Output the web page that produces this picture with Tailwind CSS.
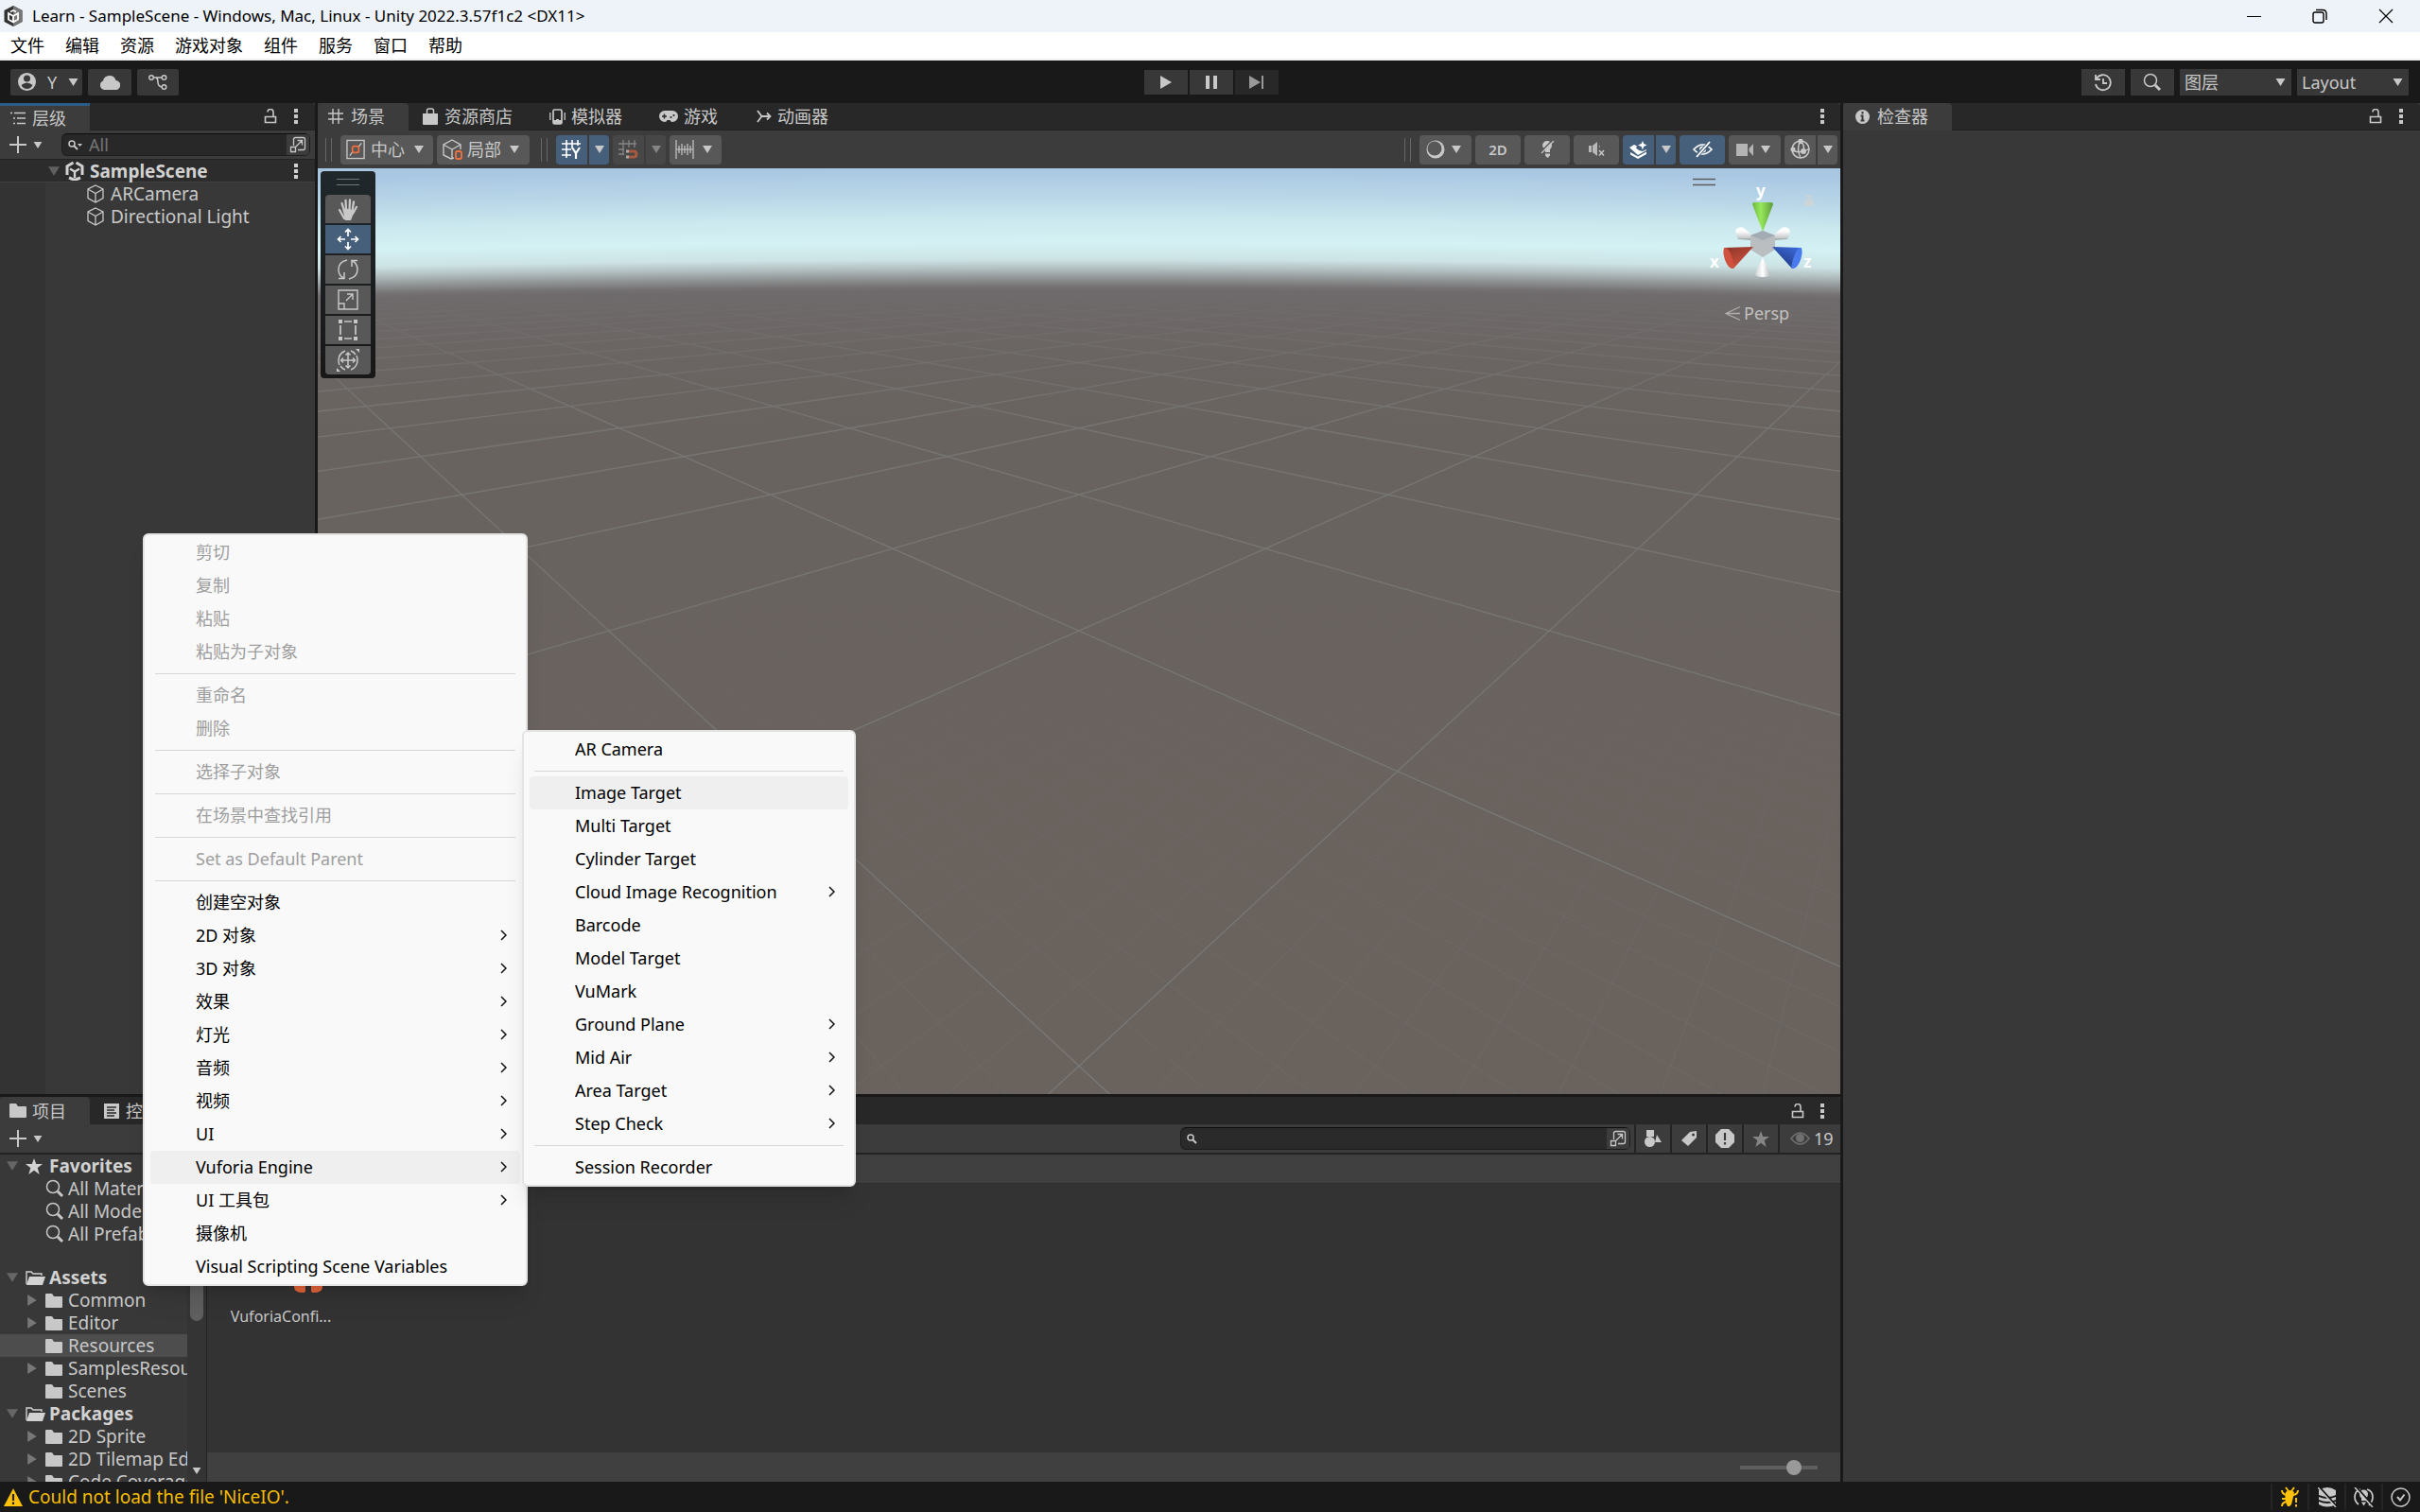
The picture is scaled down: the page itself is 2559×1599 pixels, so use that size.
<!DOCTYPE html>
<html lang="zh-CN">
  <head>
    <meta charset="UTF-8" />
    <meta name="viewport" content="width=device-width, initial-scale=1.0" />
    <title>Learn - SampleScene - Windows, Mac, Linux - Unity 2022.3.57f1c2</title>
    <script src="https://cdn.jsdelivr.net/npm/@tailwindcss/browser@4"></script>
  </head>
  <body
    class="relative flex flex-col h-screen overflow-hidden bg-[#191919] text-[#c8c8c8] text-lg leading-6 font-['Noto_Sans','Noto_Sans_CJK_SC',sans-serif]"
  >
    <!-- icon sprite -->
    <svg class="hidden">
      <symbol id="caret" viewBox="0 0 10 8"><path d="M0 0h10L5 8z" fill="currentColor" /></symbol>
      <symbol id="kebab" viewBox="0 0 4 16"><path d="M0 0h4v4H0zM0 6h4v4H0zM0 12h4v4H0z" fill="currentColor" /></symbol>
      <symbol id="lock" viewBox="0 0 14 16"><path d="M1.500 8.500h11v6h-11zM4 3.500a3 3 0 0 1 6 0v5" fill="none" stroke="currentColor" stroke-width="1.600" /></symbol>
      <symbol id="plus" viewBox="0 0 18 18"><path d="M9 0v18M0 9h18" stroke="currentColor" stroke-width="2" /></symbol>
      <symbol id="lens" viewBox="0 0 20 20"><circle cx="8" cy="8" r="6.500" fill="none" stroke="currentColor" stroke-width="1.500" /><path d="M13 13l5 5" stroke="currentColor" stroke-width="3" /></symbol>
      <symbol id="lens-sm" viewBox="0 0 13 11"><circle cx="4" cy="4" r="3" fill="none" stroke="currentColor" stroke-width="1.500" /><path d="M6 6l4 4" stroke="currentColor" stroke-width="2" /></symbol>
      <symbol id="popout" viewBox="0 0 18 18"><path d="M4.500 10V3.500q0-2 2-2h8q2 0 2 2v9q0 2-2 2H9M1.500 11.500h5v5h-5zM7 11l6-6M8.500 4.500H13.500V9.500" fill="none" stroke="currentColor" stroke-width="1.300" /></symbol>
      <symbol id="cube" viewBox="0 0 20 20"><path d="M10 1l8 4v9.500L10 19l-8-4.500V5zM2 5l8 4.500L18 5M10 9.500V19" fill="none" stroke="currentColor" stroke-width="1.300" /></symbol>
      <symbol id="folder" viewBox="0 0 18 15"><path d="M0 1q0-1 1-1h6l2 3h8q1 0 1 1v10q0 1-1 1H1q-1 0-1-1z" fill="currentColor" /></symbol>
      <symbol id="folder-open" viewBox="0 0 21 15"><path d="M1 14V1h5l2 2h9v2" fill="none" stroke="currentColor" stroke-width="1.400" /><path d="M4 6h17l-3 9H1z" fill="currentColor" /></symbol>
      <symbol id="star" viewBox="0 0 18 17"><path d="M9 0l2.200 6H18l-5.300 4 2 7L9 12.800 3.300 17l2-7L0 6h6.800z" fill="currentColor" /></symbol>
      <symbol id="chev" viewBox="0 0 7 12"><path d="M1 1l5 5-5 5" fill="none" stroke="#111" stroke-width="1.500" /></symbol>
      <symbol id="unity" viewBox="0 0 20 20"><path d="M8.500 1L2 4.800V14M11.500 1L18 4.800V14M4 17l6 2.500 6-2.500" fill="none" stroke="currentColor" stroke-width="3" /><path d="M10 10.500L5 7.500M10 10.500l5-3M10 10.500V17" fill="none" stroke="currentColor" stroke-width="2.400" /></symbol>
    </svg>

    <!-- window title -->
    <header class="flex items-center h-[34px] shrink-0 bg-[#eef3f9] text-black text-[17px]">
      <svg class="ml-1 mr-2.5 w-5 h-6" viewBox="0 0 20 24"><path d="M10 1l9.500 5v12L10 23 .5 18V6z" fill="#333" /><path d="M10 1l9.500 5v12L10 23z" fill="#777" /><path d="M10 12L5 9v6.500l5 3 5-3V9zM10 12v6M7 7.500L10 6l3 1.500" fill="none" stroke="#fff" stroke-width="1.800" /></svg>
      <span class="grow">Learn - SampleScene - Windows, Mac, Linux - Unity 2022.3.57f1c2 &lt;DX11&gt;</span>
      <div class="flex">
        <button class="grid place-items-center w-[69px] h-8" aria-label="最小化"><svg class="w-4 h-4" viewBox="0 0 16 16"><path d="M0 8.500h15" stroke="#000" /></svg></button>
        <button class="grid place-items-center w-[69px] h-8" aria-label="还原"><svg class="w-4 h-4" viewBox="0 0 16 16"><rect x="1" y="4" width="11" height="11" rx="2" fill="none" stroke="#000" stroke-width="1.400" /><path d="M4 1.500h7q4 0 4 4V12" fill="none" stroke="#000" stroke-width="1.400" /></svg></button>
        <button class="grid place-items-center w-[72px] h-8" aria-label="关闭"><svg class="w-4 h-4" viewBox="0 0 16 16"><path d="M1 1l14 14M15 1L1 15" stroke="#000" stroke-width="1.200" /></svg></button>
      </div>
    </header>

    <!-- menu bar -->
    <nav class="flex items-center gap-[22px] h-[30px] shrink-0 px-[11px] bg-white border-b-2 border-[#f0f0f0] text-black">
      <button>文件</button>
      <button>编辑</button>
      <button>资源</button>
      <button>游戏对象</button>
      <button>组件</button>
      <button>服务</button>
      <button>窗口</button>
      <button>帮助</button>
    </nav>

    <!-- main toolbar -->
    <div class="grid grid-cols-3 items-center h-[45px] shrink-0 pl-[11px] pr-3">
      <div class="flex gap-1.5">
        <button class="flex items-center gap-3 w-[76px] h-7 pl-2 rounded-xs bg-[#383838]">
          <svg class="w-[19px] h-[19px]" viewBox="0 0 19 19"><circle cx="9.500" cy="9.500" r="9.500" fill="#c8c8c8" /><circle cx="9.500" cy="6" r="3.500" fill="#383838" /><path d="M3.500 13q6-5 12 0-2 4-6 4t-6-4z" fill="#383838" /></svg>
          Y
          <svg class="w-[11px] h-2"><use href="#caret" /></svg>
        </button>
        <button class="grid place-items-center w-[46px] h-7 rounded-xs bg-[#383838]" aria-label="Cloud"><svg class="w-[22px] h-4" viewBox="0 0 22 16"><path d="M5 16a5 5 0 0 1-1-9.500A7 7 0 0 1 17.500 6 5 5 0 0 1 17 16z" fill="#c8c8c8" /></svg></button>
        <button class="grid place-items-center w-[44px] h-7 rounded-xs bg-[#383838]" aria-label="Version Control"><svg class="w-5 h-[18px]" viewBox="0 0 20 18" fill="none" stroke="#c8c8c8" stroke-width="1.500"><circle cx="3" cy="4" r="2.300" /><circle cx="16.500" cy="4" r="2.300" /><circle cx="16.500" cy="14" r="2.300" /><path d="M5.500 4H14M8 4q2 1 2 5t4 5" /></svg></button>
      </div>
      <div class="flex justify-center gap-0.5 pl-1">
        <button class="grid place-items-center w-[46px] h-[26px] bg-[#383838]" aria-label="Play"><svg class="w-3.5 h-3.5" viewBox="0 0 14 14"><path d="M1 0l12 7-12 7z" fill="#c8c8c8" /></svg></button>
        <button class="grid place-items-center w-[46px] h-[26px] bg-[#383838]" aria-label="Pause"><svg class="w-3.5 h-3.5" viewBox="0 0 14 14"><path d="M1 0h4v14H1zM9 0h4v14H9z" fill="#c8c8c8" /></svg></button>
        <button class="grid place-items-center w-[46px] h-[26px] bg-[#282828]" aria-label="Step"><svg class="w-4 h-3.5" viewBox="0 0 16 14"><path d="M0 0l12 7-12 7zM13 0h2v14h-2z" fill="#999" /></svg></button>
      </div>
      <div class="flex justify-end gap-1.5">
        <button class="grid place-items-center w-[46px] h-7 bg-[#383838]" aria-label="History"><svg class="w-5 h-5" viewBox="0 0 20 20" fill="none" stroke="#c8c8c8" stroke-width="1.800"><path d="M3 6a8 8 0 1 1-1 6M2 2v5h5M10 6v5h4" /></svg></button>
        <button class="grid place-items-center w-[46px] h-7 bg-[#383838]" aria-label="Search"><svg class="w-5 h-5"><use href="#lens" /></svg></button>
        <label class="relative">
          <select class="appearance-none block w-[118px] h-7 pl-[5px] bg-[#383838]" aria-label="图层"><option>图层</option></select>
          <svg class="absolute right-1.5 top-2.5 w-[11px] h-2 pointer-events-none"><use href="#caret" /></svg>
        </label>
        <label class="relative">
          <select class="appearance-none block w-[118px] h-7 pl-[5px] bg-[#383838]" aria-label="Layout"><option>Layout</option></select>
          <svg class="absolute right-1.5 top-2.5 w-[11px] h-2 pointer-events-none"><use href="#caret" /></svg>
        </label>
      </div>
    </div>

    <main class="flex gap-[3px] grow min-h-0">
      <div class="flex flex-col gap-[3px] grow min-w-0">
        <div class="flex gap-[3px] grow min-h-0">
          <!-- hierarchy -->
          <section class="flex flex-col w-[333px] shrink-0 bg-[#383838]">
            <div class="flex items-center h-[29px] pr-[18px] bg-[#282828] border-b border-[#222] rounded-t">
              <button class="flex items-center gap-[7px] w-[95px] h-[29px] pl-[11px] bg-[#3c3c3c] border-t-3 border-[#2c5d87]">
                <svg class="w-4 h-3.5" viewBox="0 0 16 14"><path d="M0 1.500h2M4 1.500h12M3 7h2M7 7h9M3 12.500h2M7 12.500h9" stroke="#c8c8c8" stroke-width="1.600" /></svg>
                层级
              </button>
              <svg class="ml-auto mr-[18px] w-3.5 h-4"><use href="#lock" /></svg>
              <svg class="w-1 h-4"><use href="#kebab" /></svg>
            </div>
            <div class="flex items-center h-[31px] pl-2.5 pr-[5px] bg-[#3c3c3c] border-b border-[#232323]">
              <svg class="w-[18px] h-[18px]"><use href="#plus" /></svg>
              <svg class="ml-[7px] mr-5 w-2.5 h-[7px]"><use href="#caret" /></svg>
              <label class="flex items-center grow h-6 pl-1.5 rounded-md bg-[#282828] border border-[#1d1d1d] border-t-[#0d0d0d]">
                <svg class="w-4 h-[11px]" viewBox="0 0 16 11"><circle cx="4" cy="4" r="3" fill="none" stroke="currentColor" stroke-width="1.500" /><path d="M6 6l4 4" stroke="currentColor" stroke-width="2" /><path d="M10 4h5l-2.500 3z" fill="currentColor" /></svg>
                <input class="grow w-0 ml-1.5 outline-none placeholder:text-[#757575]" placeholder="All" aria-label="Search hierarchy" />
                <div class="flex items-center h-[22px] px-[3px] rounded-r bg-[#3c3c3c]"><svg class="w-[18px] h-[18px]"><use href="#popout" /></svg></div>
              </label>
            </div>
            <div class="flex items-center h-6 pl-[51px] pr-[18px] bg-[#2c2c2c] border-b border-[#404040] text-[19px] font-bold text-[#d2d2d2]">
              <svg class="w-3 h-3 text-[#606060]"><use href="#caret" /></svg>
              <svg class="mx-1.5 w-5 h-5"><use href="#unity" /></svg>
              SampleScene
              <svg class="ml-auto w-1 h-4"><use href="#kebab" /></svg>
            </div>
            <div class="flex grow text-[19px]">
              <div class="w-12 bg-[#333]"></div>
              <ul class="grow pl-[43px]">
                <li class="flex items-center gap-1.5 h-6"><svg class="w-5 h-5"><use href="#cube" /></svg>ARCamera</li>
                <li class="flex items-center gap-1.5 h-6"><svg class="w-5 h-5"><use href="#cube" /></svg>Directional Light</li>
              </ul>
            </div>
          </section>

          <!-- scene view -->
          <section class="flex flex-col grow min-w-0 bg-[#3c3c3c]">
            <div class="flex items-center h-[29px] shrink-0 pr-[17px] bg-[#282828] border-b border-[#222] rounded-t">
              <button class="flex items-center gap-2 w-24 h-[29px] pl-[11px] rounded-t bg-[#3c3c3c]"><svg class="w-4 h-4" viewBox="0 0 16 16"><path d="M5 0v16M11 0v16M0 5h16M0 11h16" stroke="#c8c8c8" stroke-width="1.400" /></svg>场景</button>
              <button class="flex items-center gap-[7px] pl-[15px] pr-6"><svg class="w-4 h-[18px]" viewBox="0 0 16 18"><path d="M0 6h16v11q0 1-1 1H1q-1 0-1-1z" fill="#c8c8c8" /><path d="M4.500 9V3q0-2 2-2h3q2 0 2 2v6" fill="none" stroke="#c8c8c8" stroke-width="1.500" /></svg>资源商店</button>
              <button class="flex items-center gap-1.5 pl-[15px] pr-6"><svg class="w-[17px] h-[17px]" viewBox="0 0 17 17"><path d="M.8 4v8M16.200 4v8" stroke="#c8c8c8" stroke-width="1.300" /><rect x="4" y="1" width="9" height="15" rx="1.500" fill="none" stroke="#c8c8c8" stroke-width="1.700" /><path d="M4 12h3v-1h3v1h3v4H4z" fill="#c8c8c8" /></svg>模拟器</button>
              <button class="flex items-center gap-1.5 pl-[15px] pr-6"><svg class="w-5 h-3" viewBox="0 0 20 12"><path d="M6 0h8a6 6 0 0 1 0 12q-2 0-2.500-2h-3Q8 12 6 12A6 6 0 0 1 6 0z" fill="#c8c8c8" /><path d="M3 6h5M5.500 3.500v5" stroke="#282828" stroke-width="1.500" /><circle cx="12.500" cy="7" r="1.100" fill="#282828" /><circle cx="15.500" cy="5" r="1.100" fill="#282828" /></svg>游戏</button>
              <button class="flex items-center gap-1.5 pl-[17px]"><svg class="w-4 h-3.5" viewBox="0 0 16 14"><path d="M1 1l4.500 6h8M1 13l4.500-6M11 3.500L14.500 7 11 10.500" fill="none" stroke="#c8c8c8" stroke-width="1.800" /></svg>动画器</button>
              <svg class="ml-auto w-1 h-4"><use href="#kebab" /></svg>
            </div>
            <div class="flex items-center h-10 shrink-0 pl-2 pr-[3px]">
              <div class="w-[7px] h-[25px] mr-[9px] border-x border-[#666]"></div>
              <button class="flex items-center gap-[5px] w-[98px] h-[31px] pl-1.5 mr-1 rounded bg-[#585858]">
                <svg class="w-[21px] h-[22px] shrink-0" viewBox="0 0 22 22" fill="none"><rect x="1" y="1" width="19" height="20" stroke="#c8c8c8" stroke-width="1.400" /><path d="M4 18l3-4M14 8l3-4" stroke="#c8c8c8" stroke-width="1.400" /><rect x="7" y="7.500" width="7" height="7" rx="2" stroke="#f4703f" stroke-width="1.800" /></svg>
                中心
                <svg class="ml-1 w-3 h-2"><use href="#caret" /></svg>
              </button>
              <button class="flex items-center gap-1 w-[98px] h-[31px] pl-1.5 rounded bg-[#585858]">
                <svg class="w-[22px] h-[22px] shrink-0" viewBox="0 0 22 22" fill="none"><path d="M12 20l-3 1-8-4V6l9-5 9 5v5M1 6l9 5 9-5M10 11v9" stroke="#c8c8c8" stroke-width="1.400" /><rect x="14" y="13" width="6" height="8" rx="2" stroke="#f4703f" stroke-width="1.800" /></svg>
                局部
                <svg class="ml-1 w-3 h-2"><use href="#caret" /></svg>
              </button>
              <div class="w-[7px] h-[25px] ml-3 mr-[9px] border-x border-[#666]"></div>
              <button class="grid place-items-center w-[33px] h-[31px] mr-0.5 rounded-l bg-[#46607c]" aria-label="Grid"><svg class="w-[22px] h-[22px]" viewBox="0 0 22 22" fill="none" stroke="#fff"><path d="M5 1v19M11 1v9M17 1v6M0 5h20M0 11h10M0 17h10" stroke-width="1.600" /><path d="M11 9l4 6 4-6M15 15v6" stroke-width="2.200" /></svg></button>
              <button class="grid place-items-center w-[21px] h-[31px] mr-1 rounded-r bg-[#46607c]" aria-label="Grid options"><svg class="w-3 h-2"><use href="#caret" /></svg></button>
              <button class="grid place-items-center w-[33px] h-[31px] mr-0.5 rounded-l bg-[#474747]" aria-label="Snap"><svg class="w-[22px] h-[22px]" viewBox="0 0 22 22" fill="none"><path d="M5 1v16M11 1v8M17 1v8M0 5h19M0 11h6M0 16h6" stroke="#858585" stroke-width="1.300" /><path d="M11 13h5q3 0 3 3t-3 3h-5" stroke="#a85a41" stroke-width="3" /><path d="M8 11.500h3v3H8zM8 17.500h3v3H8z" fill="#aaa" /></svg></button>
              <button class="grid place-items-center w-[21px] h-[31px] mr-1 rounded-r bg-[#474747] text-[#858585]" aria-label="Snap options"><svg class="w-3 h-2"><use href="#caret" /></svg></button>
              <button class="flex items-center gap-2 w-[55px] h-[31px] pl-1.5 rounded bg-[#585858]" aria-label="Increment"><svg class="w-5 h-5" viewBox="0 0 20 20"><path d="M1 0v20M4 6v8M7 4v12M10 6v8M13 4v12M16 6v8M19 0v20M1 10h18" stroke="#c8c8c8" stroke-width="1.200" /></svg><svg class="w-3 h-2"><use href="#caret" /></svg></button>

              <div class="w-[7px] h-[25px] ml-auto mr-[9px] border-x border-[#666]"></div>
              <button class="flex items-center gap-1.5 w-[55px] h-[31px] pl-[7px] mr-1 rounded bg-[#585858]" aria-label="Shading"><svg class="w-5 h-5" viewBox="0 0 20 20"><circle cx="10" cy="10" r="9.500" fill="#c8c8c8" /><circle cx="9" cy="9" r="7.500" fill="#585858" /></svg><svg class="w-3 h-2"><use href="#caret" /></svg></button>
              <button class="w-12 h-[31px] mr-1 rounded bg-[#585858] text-[15px] font-semibold">2D</button>
              <button class="grid place-items-center w-12 h-[31px] mr-1 rounded bg-[#585858]" aria-label="Lighting"><svg class="w-4 h-[18px]" viewBox="0 0 16 18"><path d="M3 5a5 5 0 0 1 10 0q0 2-2 4v3H6V9Q3 7 3 5zM6 13.500h5v2L8.500 18 6 15.500z" fill="#c8c8c8" /><path d="M2 11L13 0" stroke="#585858" stroke-width="1.500" /><path d="M2 13L15 0" stroke="#c8c8c8" stroke-width="1.300" /></svg></button>
              <button class="grid place-items-center w-12 h-[31px] mr-1 rounded bg-[#585858]" aria-label="Audio"><svg class="w-[17px] h-4" viewBox="0 0 17 16"><path d="M0 4h3v7H0zM4 4l5-4v15l-5-4zM10.500 3q2 1 1.500 4" fill="#b8b8b8" /><path d="M11 9l5 5.500M16 9l-5 5.500" stroke="#c8c8c8" stroke-width="1.500" /></svg></button>
              <button class="grid place-items-center w-[33px] h-[31px] mr-0.5 rounded-l bg-[#46607c]" aria-label="Effects"><svg class="w-[19px] h-[19px]" viewBox="0 0 19 19" fill="#fff"><path d="M14 0l1.200 3L18.500 4.500 15.200 6 14 9.500 12.600 6 9 4.500 12.600 3zM0 7l5-3 3 1.500-1 2 3 2.500 4 1 4-2v1l-9 5zM1 12l8 4.500 9-5v2.500L9 19 1 14.500z" /></svg></button>
              <button class="grid place-items-center w-[21px] h-[31px] mr-1 rounded-r bg-[#46607c]" aria-label="Effects options"><svg class="w-3 h-2"><use href="#caret" /></svg></button>
              <button class="grid place-items-center w-12 h-[31px] mr-1 rounded bg-[#46607c]" aria-label="Hidden objects"><svg class="w-[21px] h-[18px]" viewBox="0 0 21 18" fill="none" stroke="#fff"><path d="M1 9q9.500-10 19 0-9.500 10-19 0z" stroke-width="1.700" /><circle cx="10.500" cy="9" r="3.500" fill="#fff" stroke="none" /><path d="M3 17L18 2" stroke="#46607c" stroke-width="4" /><path d="M4 17L18 1" stroke-width="1.800" /></svg></button>
              <button class="flex items-center gap-1.5 w-[55px] h-[31px] pl-2 mr-1 rounded bg-[#585858]" aria-label="Camera"><svg class="w-[19px] h-[13px]" viewBox="0 0 19 13"><path d="M0 0h12v13H0zM13.500 5L18 0v13l-4.500-5z" fill="#b4b4b4" /></svg><svg class="w-3 h-2"><use href="#caret" /></svg></button>
              <button class="grid place-items-center w-[33px] h-[31px] mr-0.5 rounded-l bg-[#585858]" aria-label="Gizmos"><svg class="w-[22px] h-[22px]" viewBox="0 0 22 22" fill="none" stroke="#c8c8c8" stroke-width="1.500"><circle cx="11" cy="11" r="9" /><path d="M11 2q-5 7 0 18M11 2q5 5 3 11M2 11q4 4 12 2 4-1 6-3" /><circle cx="11" cy="2.500" r="2" fill="#c8c8c8" /><circle cx="3" cy="11" r="1.800" fill="#c8c8c8" /><circle cx="14" cy="13" r="2.200" fill="#c8c8c8" /></svg></button>
              <button class="grid place-items-center w-[21px] h-[31px] rounded-r bg-[#585858]" aria-label="Gizmos options"><svg class="w-3 h-2"><use href="#caret" /></svg></button>
            </div>
            <div class="relative grow min-h-0">
              <svg class="absolute inset-0 w-full h-full" viewBox="0 0 1610 979" preserveAspectRatio="none">
                <defs>
                  <radialGradient id="sky" gradientUnits="userSpaceOnUse" cx="805" cy="36000" r="36000">
                    <stop offset="0.97200" stop-color="#6a625d" />
                    <stop offset="0.99200" stop-color="#69635f" />
                    <stop offset="0.99450" stop-color="#6a6562" />
                    <stop offset="0.99640" stop-color="#6f6a6b" />
                    <stop offset="0.99653" stop-color="#757273" />
                    <stop offset="0.99678" stop-color="#919596" />
                    <stop offset="0.99706" stop-color="#b3c0c2" />
                    <stop offset="0.99733" stop-color="#cde3e5" />
                    <stop offset="0.99785" stop-color="#d4f2f4" />
                    <stop offset="0.99845" stop-color="#cbe9ee" />
                    <stop offset="0.99915" stop-color="#bad7e8" />
                    <stop offset="1" stop-color="#a9c7e3" />
                  </radialGradient>
                  <linearGradient id="fade" x2="0" y2="1"><stop offset="0.13" stop-color="#000" /><stop offset="0.28" stop-color="#fff" /></linearGradient>
                  <linearGradient id="fade-near" x2="0" y2="1"><stop offset="0.45" stop-color="#000" /><stop offset="0.9" stop-color="#fff" /></linearGradient>
                  <mask id="far-mask"><rect width="1610" height="979" fill="url(#fade)" /></mask>
                  <mask id="near-mask"><rect width="1610" height="979" fill="url(#fade-near)" /></mask>
                </defs>
                <rect width="1610" height="979" fill="url(#sky)" />
                <g mask="url(#near-mask)"><path id="minor-grid" fill="none" stroke="#7c8a8c" stroke-opacity="0.220" /></g>
                <g mask="url(#far-mask)"><path id="major-grid" fill="none" stroke="#a4b4b8" stroke-opacity="0.240" stroke-width="1.400" /></g>
              </svg>

              <!-- tools overlay -->
              <div class="absolute left-[3px] top-[3px] flex flex-col items-center gap-0.5 w-[58px] pb-1 rounded bg-linear-to-b from-[#20282c] to-[#171717]">
                <div class="w-6 h-[7px] mt-2 mb-2 border-y border-[#777]"></div>
                <button class="grid place-items-center w-12 h-[30px] rounded-t bg-[#585858]" aria-label="View"><svg class="w-[22px] h-[23px]" viewBox="0 0 22 23"><path d="M7 21L2 12M7 13L4.500 5M9 12L8.500 2M12.500 12l.5-10.500M15.500 13l1.500-9.500M16 16l4-7" fill="none" stroke="#c8c8c8" stroke-width="2.300" stroke-linecap="round" /><path d="M5.500 12q5-3 11 1l-.5 5-2 5H8z" fill="#c8c8c8" /></svg></button>
                <button class="grid place-items-center w-12 h-[30px] bg-[#46607c]" aria-label="Move"><svg class="w-6 h-6" viewBox="0 0 24 24" fill="none" stroke="#fff" stroke-width="1.700"><path d="M12 2v7M12 15v7M2 12h7M15 12h7M9 4.500l3-3 3 3M9 19.500l3 3 3-3M4.500 9l-3 3 3 3M19.500 9l3 3-3 3" /></svg></button>
                <button class="grid place-items-center w-12 h-[30px] bg-[#585858]" aria-label="Rotate"><svg class="w-6 h-6" viewBox="0 0 24 24" fill="none" stroke="#c8c8c8" stroke-width="1.500"><path d="M11 2Q2 4 2 12q0 6 5 9M8 15v6.500H2M13 22q9-2 9-10 0-6-5-9M16 9V2.500h6" /></svg></button>
                <button class="grid place-items-center w-12 h-[30px] bg-[#585858]" aria-label="Scale"><svg class="w-[22px] h-[22px]" viewBox="0 0 22 22" fill="none" stroke="#c8c8c8" stroke-width="1.400"><path d="M1 1h20v20H1zM1 15h6v6M9 12l7-7M10 5h6v6" /></svg></button>
                <button class="grid place-items-center w-12 h-[30px] bg-[#585858]" aria-label="Rect"><svg class="w-[22px] h-[22px]" viewBox="0 0 22 22"><path d="M1 0h4v4H1zM17 0h4v4h-4zM1 18h4v4H1zM17 18h4v4h-4z" fill="#c8c8c8" /><path d="M7 2h8M7 20h8M3 6v10M19 6v10" stroke="#c8c8c8" stroke-width="1.700" /></svg></button>
                <button class="grid place-items-center w-12 h-[30px] rounded-b bg-[#585858]" aria-label="Transform"><svg class="w-6 h-6" viewBox="0 0 24 24" fill="none" stroke="#c8c8c8" stroke-width="1.500"><path d="M9 2Q2 5 2 12M4 18q2 3 5 4M15 22q7-3 7-10M20 6q-2-3-5-4M2 12q0 3 1 5M22 12q0-3-1-5M12 4v16M4.500 12h15M9.500 6.500L12 4l2.500 2.500M9.500 17.500L12 20l2.500-2.500M7 9.500L4.500 12 7 14.500M17 9.500l2.500 2.500-2.500 2.500" /><path d="M20 0h4v4zM0 20v4h4z" fill="#c8c8c8" stroke="none" /></svg></button>
              </div>

              <!-- orientation gizmo -->
              <svg class="absolute -right-1 top-0.5 w-[170px] h-[170px] font-bold text-[17px]" viewBox="0 0 170 170">
                <defs>
                  <linearGradient id="gy"><stop stop-color="#6fb73f" /><stop offset=".4" stop-color="#96e85c" /><stop offset="1" stop-color="#5f9c39" /></linearGradient>
                  <linearGradient id="gw"><stop stop-color="#cfd3d4" /><stop offset=".5" stop-color="#fff" /><stop offset="1" stop-color="#b4b8ba" /></linearGradient>
                  <linearGradient id="gs" x2="0" y2="1"><stop offset=".3" stop-color="#fff" /><stop offset=".9" stop-color="#c2c6c8" /><stop offset="1" stop-color="#6c7072" /></linearGradient>
                  <linearGradient id="gr" x2="0.5" y2="1"><stop stop-color="#8a3529" /><stop offset="1" stop-color="#d0523e" /></linearGradient>
                  <linearGradient id="gb" x1="1" x2="0.4" y2="1"><stop stop-color="#3f6ee0" /><stop offset="1" stop-color="#1f3a80" /></linearGradient>
                </defs>
                <path d="M10 9.500h24M10 15.500h24" stroke="#5c5c5c" stroke-width="1.500" />
                <text x="77" y="28" fill="#fff">y</text>
                <text x="28" y="103" fill="#fff">x</text>
                <text x="127" y="103" fill="#fff">z</text>
                <path d="M128 31h10v7h-10zM129.500 28v-1q3-2 6 0v4" fill="#d0d4d6" opacity=".8" />
                <path d="M71 73.500L58 73q-4-6-2-11 4-3 8-1l7 6zM97 73.500l13-.5q4-6 2-11-4-3-8-1l-7 6z" fill="url(#gs)" />
                <path d="M71 69l13-5 13 5v15l-13 8-13-8z" fill="#bbbec0" />
                <path d="M71 69l13-5 13 5-13 5z" fill="#a2acb4" />
                <path d="M73 36q0-2 2-2h18q2 0 2 2L84 65z" fill="url(#gy)" />
                <path d="M84 92l8 18q-1 3-8 3t-8-3z" fill="url(#gw)" />
                <path d="M74 81l-31 1q-2 12 10 22z" fill="url(#gr)" /><path d="M43 82q7-1 11 21-4 3-8-4-5-9-3-17z" fill="#d0523e" />
                <path d="M94 81l31 1q2 12-10 22z" fill="url(#gb)" /><path d="M125 82q-7-1-11 21 4 3 8-4 5-9 3-17z" fill="#4a7bee" />
                <g class="font-normal text-lg"><path d="M60 144.500l-15 7 15 7M60 151.500H45" fill="none" stroke="#b0aeac" stroke-width="1.300" /><text x="64" y="158" fill="#c4c2c0">Persp</text></g>
              </svg>
            </div>
          </section>
        </div>

        <!-- project browser -->
        <section class="flex flex-col h-[407px] shrink-0 bg-[#333]">
          <div class="flex items-center h-[29px] shrink-0 pr-[17px] bg-[#282828] rounded-t">
            <button class="flex items-center gap-1.5 w-[95px] h-[29px] pl-2.5 rounded-t bg-[#3c3c3c]"><svg class="w-[18px] h-[15px]"><use href="#folder" /></svg>项目</button>
            <button class="flex items-center gap-[7px] h-[29px] pl-[15px]"><svg class="w-4 h-4" viewBox="0 0 16 16"><path d="M0 0h16v16H0z" fill="#c8c8c8" /><path d="M3 4h10M3 7h8M3 10h10M3 13h8" stroke="#282828" stroke-width="1.500" /></svg>控制台</button>
            <svg class="ml-auto mr-[17px] w-3.5 h-4"><use href="#lock" /></svg>
            <svg class="w-1 h-4"><use href="#kebab" /></svg>
          </div>
          <div class="flex items-center h-8 shrink-0 pl-2.5 bg-[#3c3c3c] border-b-2 border-[#232323]">
            <svg class="w-[18px] h-[18px]"><use href="#plus" /></svg>
            <svg class="ml-[7px] w-2.5 h-[7px]"><use href="#caret" /></svg>
            <label class="flex items-center w-[476px] h-6 ml-auto mr-1 pl-1.5 rounded-md bg-[#2a2a2a] border border-[#1d1d1d] border-t-[#0d0d0d]">
              <svg class="w-[13px] h-[11px]"><use href="#lens-sm" /></svg>
              <input class="grow w-0 outline-none" aria-label="Search project" />
              <div class="flex items-center h-[22px] px-[3px] rounded-r bg-[#3c3c3c]"><svg class="w-[18px] h-[18px]"><use href="#popout" /></svg></div>
            </label>
            <button class="grid place-items-center w-[38px] h-[30px] border-l-2 border-[#232323]" aria-label="Search by type"><svg class="w-[18px] h-[18px]" viewBox="0 0 18 18" fill="#c8c8c8"><path d="M2 0h8v7H2zM13 5l5 8h-7z" /><circle cx="5.500" cy="12.500" r="5.500" /></svg></button>
            <button class="grid place-items-center w-[38px] h-[30px] border-l-2 border-[#232323]" aria-label="Search by label"><svg class="w-[17px] h-4" viewBox="0 0 17 16"><path d="M0 10L9 1l7-1v7L7 16z" fill="#c8c8c8" /><circle cx="12.500" cy="4" r="1.500" fill="#3c3c3c" /></svg></button>
            <button class="grid place-items-center w-[38px] h-[30px] border-l-2 border-[#232323]" aria-label="Search by log"><svg class="w-5 h-5" viewBox="0 0 20 20"><path d="M6 0h8l6 6v8l-6 6H6l-6-6V6z" fill="#c8c8c8" /><path d="M10 4v8M10 14v2.500" stroke="#3c3c3c" stroke-width="2.200" /></svg></button>
            <button class="grid place-items-center w-[38px] h-[30px] border-l-2 border-[#232323] text-[#858585]" aria-label="Save search"><svg class="w-[18px] h-[17px]"><use href="#star" /></svg></button>
            <button class="flex items-center gap-1 w-[66px] h-[30px] pl-[11px] border-l-2 border-[#232323]"><svg class="w-[21px] h-3.5 shrink-0" viewBox="0 0 21 14"><path d="M1 7q9.500-12 19 0-9.500 12-19 0z" fill="none" stroke="#707070" stroke-width="1.500" /><circle cx="10.500" cy="6.500" r="4.500" fill="#707070" /></svg>19</button>
          </div>
          <div class="flex grow min-h-0">
            <div class="flex w-[219px] shrink-0 bg-[#383838] border-r border-[#232323]">
              <ul class="w-[198px] overflow-hidden text-[19px] whitespace-nowrap">
                <li class="flex items-center h-6 pl-[7px] font-bold text-[#d2d2d2]"><svg class="w-3 h-3 mr-2 text-[#666]"><use href="#caret" /></svg><svg class="w-[18px] h-[17px] mr-[7px]"><use href="#star" /></svg>Favorites</li>
                <li class="flex items-center gap-1 h-6 pl-12"><svg class="w-5 h-5 shrink-0"><use href="#lens" /></svg>All Materials</li>
                <li class="flex items-center gap-1 h-6 pl-12"><svg class="w-5 h-5 shrink-0"><use href="#lens" /></svg>All Models</li>
                <li class="flex items-center gap-1 h-6 pl-12"><svg class="w-5 h-5 shrink-0"><use href="#lens" /></svg>All Prefabs</li>
                <li class="flex items-center h-6 mt-[22px] pl-[7px] font-bold text-[#d2d2d2]"><svg class="w-3 h-3 mr-2 text-[#666]"><use href="#caret" /></svg><svg class="w-[21px] h-[15px] mr-1"><use href="#folder-open" /></svg>Assets</li>
                <li class="flex items-center h-6 pl-[28px]"><svg class="w-3 h-3 mr-2 -rotate-90 text-[#777]"><use href="#caret" /></svg><svg class="w-[18px] h-[15px] mr-1.5"><use href="#folder" /></svg>Common</li>
                <li class="flex items-center h-6 pl-[28px]"><svg class="w-3 h-3 mr-2 -rotate-90 text-[#777]"><use href="#caret" /></svg><svg class="w-[18px] h-[15px] mr-1.5"><use href="#folder" /></svg>Editor</li>
                <li class="flex items-center h-6 pl-12 bg-[#4d4d4d]"><svg class="w-[18px] h-[15px] mr-1.5"><use href="#folder" /></svg>Resources</li>
                <li class="flex items-center h-6 pl-[28px]"><svg class="w-3 h-3 mr-2 shrink-0 -rotate-90 text-[#777]"><use href="#caret" /></svg><svg class="w-[18px] h-[15px] mr-1.5 shrink-0"><use href="#folder" /></svg>SamplesResources</li>
                <li class="flex items-center h-6 pl-12"><svg class="w-[18px] h-[15px] mr-1.5"><use href="#folder" /></svg>Scenes</li>
                <li class="flex items-center h-6 pl-[7px] font-bold text-[#d2d2d2]"><svg class="w-3 h-3 mr-2 text-[#666]"><use href="#caret" /></svg><svg class="w-[21px] h-[15px] mr-1"><use href="#folder-open" /></svg>Packages</li>
                <li class="flex items-center h-6 pl-[28px]"><svg class="w-3 h-3 mr-2 -rotate-90 text-[#777]"><use href="#caret" /></svg><svg class="w-[18px] h-[15px] mr-1.5"><use href="#folder" /></svg>2D Sprite</li>
                <li class="flex items-center h-6 pl-[28px]"><svg class="w-3 h-3 mr-2 shrink-0 -rotate-90 text-[#777]"><use href="#caret" /></svg><svg class="w-[18px] h-[15px] mr-1.5 shrink-0"><use href="#folder" /></svg>2D Tilemap Editor</li>
                <li class="flex items-center h-6 pl-[28px]"><svg class="w-3 h-3 mr-2 shrink-0 -rotate-90 text-[#777]"><use href="#caret" /></svg><svg class="w-[18px] h-[15px] mr-1.5 shrink-0"><use href="#folder" /></svg>Code Coverage</li>
              </ul>
              <div class="flex flex-col items-center grow pt-4 pb-2 bg-[#343434]">
                <div class="w-3.5 h-40 rounded-full bg-[#5f5f5f]"></div>
                <svg class="mt-auto w-2.5 h-[7px]"><use href="#caret" /></svg>
              </div>
            </div>
            <div class="flex flex-col grow">
              <div class="h-[31px] bg-[#404040] border-b border-[#2e2e2e]"></div>
              <div class="grow px-6 pt-4">
                <figure class="w-[108px]">
                  <svg class="w-[108px] h-[100px]" viewBox="0 0 108 100"><path d="M68 60h12v37q0 2-2 2-10 0-10-6zM86 60h12v33q0 6-10 6-2 0-2-2z" fill="#e8653a" /></svg>
                  <figcaption class="mt-3 text-center text-base">VuforiaConfi...</figcaption>
                </figure>
              </div>
              <div class="flex items-center justify-end h-[31px] pr-6 bg-[#404040]">
                <input
                  type="range"
                  value="74"
                  aria-label="Icon size"
                  class="appearance-none w-[82px] h-1 bg-[#5e5e5e] [&::-webkit-slider-thumb]:appearance-none [&::-webkit-slider-thumb]:w-4 [&::-webkit-slider-thumb]:h-4 [&::-webkit-slider-thumb]:rounded-full [&::-webkit-slider-thumb]:bg-[#999]"
                />
              </div>
            </div>
          </div>
        </section>
      </div>

      <!-- inspector -->
      <aside class="w-[610px] shrink-0 bg-[#383838]">
        <div class="flex items-center h-[29px] pr-[18px] bg-[#282828] border-b border-[#222] rounded-t">
          <button class="flex items-center gap-2 w-[115px] h-[29px] pl-[13px] rounded-t bg-[#3c3c3c]"><svg class="w-[15px] h-[15px]" viewBox="0 0 15 15"><circle cx="7.500" cy="7.500" r="7.500" fill="#c8c8c8" /><path d="M7.500 2v2.500M5.500 6.500h2v5M5.500 11.500h4" fill="none" stroke="#3c3c3c" stroke-width="2" /></svg>检查器</button>
          <svg class="ml-auto mr-[18px] w-3.5 h-4"><use href="#lock" /></svg>
          <svg class="w-1 h-4"><use href="#kebab" /></svg>
        </div>
      </aside>
    </main>

    <!-- status bar -->
    <footer class="flex items-center h-8 shrink-0 pl-1 pr-0.5 text-[19px] text-[#f4bc02]">
      <svg class="w-5 h-[19px] mr-1.5" viewBox="0 0 20 19"><path d="M10 0l10 19H0z" fill="#ffc107" /><path d="M10 6v7M10 14.500v2.500" stroke="#222" stroke-width="2.200" /></svg>
      <span class="grow">Could not load the file 'NiceIO'.</span>
      <button class="grid place-items-center w-[39px] h-7 border-l-2 border-[#262626]" aria-label="Debugger"><svg class="w-[19px] h-[22px]" viewBox="0 0 19 22"><path d="M5 6q4-4 9 0l-1 5-2 8-2 2H7q-4-6-2-15z" fill="#ffc107" /><path d="M5 1l3 4M14 1l-3 4M1 4q0 4 5 5M1 13h4M1 21q0-4 5-5M18 4q0 4-5 5M16 12v5M16 19v2.500" fill="none" stroke="#ffc107" stroke-width="2" /></svg></button>
      <button class="grid place-items-center w-[39px] h-7 border-l-2 border-[#262626]" aria-label="Cache server"><svg class="w-5 h-[21px]" viewBox="0 0 20 21"><path d="M1 3q9-6 18 0v5q-8 4-18 0zM1 10q9 4 18 0v3q-9 4-18 0zM1 15q9 4 18 0v3q-9 5-18 0z" fill="#c8c8c8" /><path d="M2 0l18 20" stroke="#191919" stroke-width="2" /><path d="M0 0l19 21" stroke="#c8c8c8" stroke-width="1.500" /></svg></button>
      <button class="grid place-items-center w-[39px] h-7 border-l-2 border-[#262626]" aria-label="Auto lighting"><svg class="w-[21px] h-[21px]" viewBox="0 0 21 21"><path d="M7 2Q1 4 1 10q0 5 4 8M14 2q6 2 6 8 0 5-4 9" fill="none" stroke="#c8c8c8" stroke-width="1.700" /><path d="M6 7a4.500 4.500 0 0 1 9 0q0 3-2 4v3H8v-3Q6 10 6 7zM8 15.500h5l-2.500 4z" fill="#c8c8c8" /><path d="M3 0l18 20" stroke="#191919" stroke-width="2" /><path d="M1 0l19 21" stroke="#c8c8c8" stroke-width="1.500" /></svg></button>
      <button class="grid place-items-center w-[39px] h-7 border-l-2 border-[#262626]" aria-label="Progress"><svg class="w-[21px] h-[21px]" viewBox="0 0 21 21" fill="none" stroke="#c8c8c8" stroke-width="1.500"><circle cx="10.500" cy="10.500" r="9.500" /><path d="M7 10l3 3.500 4.500-6" stroke-width="2" /></svg></button>
    </footer>

    <!-- hierarchy context menu -->
    <div role="menu" class="absolute left-[151px] top-[564px] flex flex-col w-[407px] py-px px-1.5 rounded-md border-2 border-[#e3e3e3] bg-[#f9f9f9] text-black shadow-xl">
      <button role="menuitem" disabled class="h-[35px] pl-12 pb-0.5 text-left text-[#9e9e9e]">剪切</button>
      <button role="menuitem" disabled class="h-[35px] pl-12 pb-0.5 text-left text-[#9e9e9e]">复制</button>
      <button role="menuitem" disabled class="h-[35px] pl-12 pb-0.5 text-left text-[#9e9e9e]">粘贴</button>
      <button role="menuitem" disabled class="h-[35px] pl-12 pb-0.5 text-left text-[#9e9e9e]">粘贴为子对象</button>
      <hr class="my-[5px] mx-[5px] border-[#d7d7d7]" />
      <button role="menuitem" disabled class="h-[35px] pl-12 pb-0.5 text-left text-[#9e9e9e]">重命名</button>
      <button role="menuitem" disabled class="h-[35px] pl-12 pb-0.5 text-left text-[#9e9e9e]">删除</button>
      <hr class="my-[5px] mx-[5px] border-[#d7d7d7]" />
      <button role="menuitem" disabled class="h-[35px] pl-12 pb-0.5 text-left text-[#9e9e9e]">选择子对象</button>
      <hr class="my-[5px] mx-[5px] border-[#d7d7d7]" />
      <button role="menuitem" disabled class="h-[35px] pl-12 pb-0.5 text-left text-[#9e9e9e]">在场景中查找引用</button>
      <hr class="my-[5px] mx-[5px] border-[#d7d7d7]" />
      <button role="menuitem" disabled class="h-[35px] pl-12 pb-0.5 text-left text-[#9e9e9e]">Set as Default Parent</button>
      <hr class="my-[5px] mx-[5px] border-[#d7d7d7]" />
      <button role="menuitem" class="h-[35px] pl-12 pb-0.5 text-left">创建空对象</button>
      <button role="menuitem" class="flex items-center justify-between h-[35px] pl-12 pr-3.5 pb-0.5">2D 对象<svg class="w-[7px] h-3"><use href="#chev" /></svg></button>
      <button role="menuitem" class="flex items-center justify-between h-[35px] pl-12 pr-3.5 pb-0.5">3D 对象<svg class="w-[7px] h-3"><use href="#chev" /></svg></button>
      <button role="menuitem" class="flex items-center justify-between h-[35px] pl-12 pr-3.5 pb-0.5">效果<svg class="w-[7px] h-3"><use href="#chev" /></svg></button>
      <button role="menuitem" class="flex items-center justify-between h-[35px] pl-12 pr-3.5 pb-0.5">灯光<svg class="w-[7px] h-3"><use href="#chev" /></svg></button>
      <button role="menuitem" class="flex items-center justify-between h-[35px] pl-12 pr-3.5 pb-0.5">音频<svg class="w-[7px] h-3"><use href="#chev" /></svg></button>
      <button role="menuitem" class="flex items-center justify-between h-[35px] pl-12 pr-3.5 pb-0.5">视频<svg class="w-[7px] h-3"><use href="#chev" /></svg></button>
      <button role="menuitem" class="flex items-center justify-between h-[35px] pl-12 pr-3.5 pb-0.5">UI<svg class="w-[7px] h-3"><use href="#chev" /></svg></button>
      <button role="menuitem" class="flex items-center justify-between h-[35px] pl-12 pr-3.5 pb-0.5 rounded bg-[#efefef]">Vuforia Engine<svg class="w-[7px] h-3"><use href="#chev" /></svg></button>
      <button role="menuitem" class="flex items-center justify-between h-[35px] pl-12 pr-3.5 pb-0.5">UI 工具包<svg class="w-[7px] h-3"><use href="#chev" /></svg></button>
      <button role="menuitem" class="h-[35px] pl-12 pb-0.5 text-left">摄像机</button>
      <button role="menuitem" class="h-[35px] pl-12 pb-0.5 text-left">Visual Scripting Scene Variables</button>
    </div>

    <!-- Vuforia Engine submenu -->
    <div role="menu" class="absolute left-[552px] top-[772px] flex flex-col w-[353px] py-px px-1.5 rounded-md border-2 border-[#e3e3e3] bg-[#f9f9f9] text-black shadow-xl">
      <button role="menuitem" class="h-[35px] pl-12 pb-0.5 text-left">AR Camera</button>
      <hr class="my-[5px] mx-[5px] border-[#d7d7d7]" />
      <button role="menuitem" class="h-[35px] pl-12 pb-0.5 text-left rounded bg-[#efefef]">Image Target</button>
      <button role="menuitem" class="h-[35px] pl-12 pb-0.5 text-left">Multi Target</button>
      <button role="menuitem" class="h-[35px] pl-12 pb-0.5 text-left">Cylinder Target</button>
      <button role="menuitem" class="flex items-center justify-between h-[35px] pl-12 pr-3.5 pb-0.5">Cloud Image Recognition<svg class="w-[7px] h-3"><use href="#chev" /></svg></button>
      <button role="menuitem" class="h-[35px] pl-12 pb-0.5 text-left">Barcode</button>
      <button role="menuitem" class="h-[35px] pl-12 pb-0.5 text-left">Model Target</button>
      <button role="menuitem" class="h-[35px] pl-12 pb-0.5 text-left">VuMark</button>
      <button role="menuitem" class="flex items-center justify-between h-[35px] pl-12 pr-3.5 pb-0.5">Ground Plane<svg class="w-[7px] h-3"><use href="#chev" /></svg></button>
      <button role="menuitem" class="flex items-center justify-between h-[35px] pl-12 pr-3.5 pb-0.5">Mid Air<svg class="w-[7px] h-3"><use href="#chev" /></svg></button>
      <button role="menuitem" class="flex items-center justify-between h-[35px] pl-12 pr-3.5 pb-0.5">Area Target<svg class="w-[7px] h-3"><use href="#chev" /></svg></button>
      <button role="menuitem" class="flex items-center justify-between h-[35px] pl-12 pr-3.5 pb-0.5">Step Check<svg class="w-[7px] h-3"><use href="#chev" /></svg></button>
      <hr class="my-[5px] mx-[5px] border-[#d7d7d7]" />
      <button role="menuitem" class="h-[35px] pl-12 pb-0.5 text-left">Session Recorder</button>
    </div>

    <script>
      // ground grid: two line families, one per vanishing point
      function gridPath(from, to, step) {
        let d = "";
        for (let k = from; k <= to; k += step) {
          const dx = 950 * (k + 0.911) * 1.2;
          const dy = 801 * 1.2;
          d += `M-145 70l${dx} ${dy}M1755 70l${-dx} ${dy}`;
        }
        return d;
      }
      document.getElementById("major-grid").setAttribute("d", gridPath(0, 24, 1));
      document.getElementById("minor-grid").setAttribute("d", gridPath(-0.9, 3, 0.1));
    </script>
  </body>
</html>
